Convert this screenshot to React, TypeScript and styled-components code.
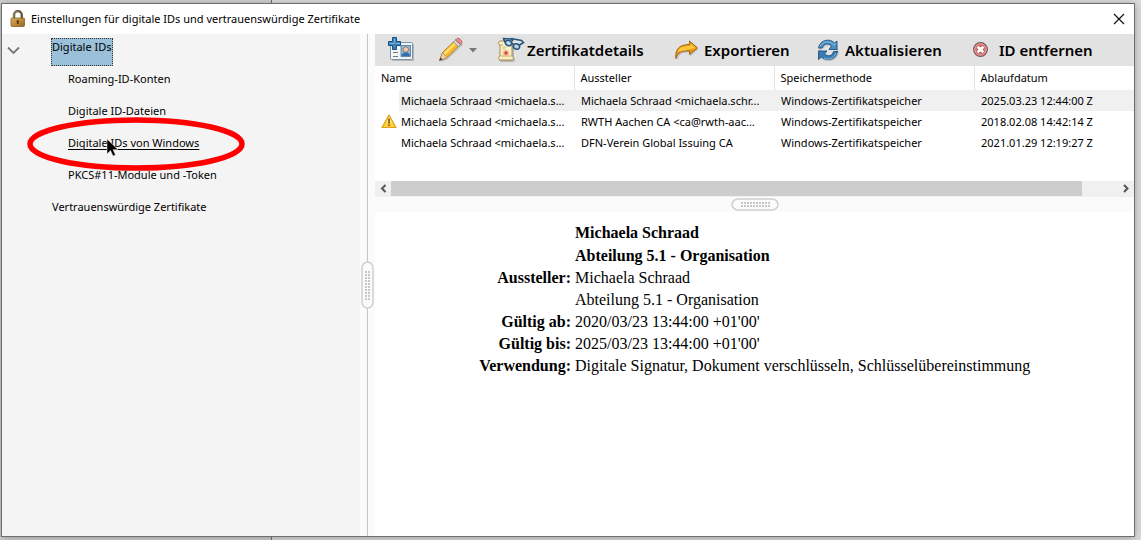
import React from "react";
import styled, { createGlobalStyle } from "styled-components";

const Global = createGlobalStyle`
  * { box-sizing: border-box; }
  body { margin: 0; background: #d2d1d2; color: #000; font: 12px/18px "Noto Sans", "Open Sans", sans-serif; }
  button { font: inherit; color: inherit; background: none; border: 0; padding: 0; }
  svg { display: block; flex: none; }
`;

const Desktop = styled.div`
  display: flex;
  min-height: 100vh;
  padding: 3px 6px 3px 1px;
  background: linear-gradient(90deg, transparent 271px, #707070 271px, #707070 272px, #dcdcdc 272px);
`;

const Window = styled.main`
  flex: 1;
  min-width: 0;
  display: flex;
  flex-direction: column;
  background: #fff;
  border: 1px solid #6e6e6e;
  box-shadow: 0 1px 8px rgba(0, 0, 0, 0.3);
`;

const TitleBar = styled.header`
  display: flex;
  align-items: center;
  gap: 4px;
  height: 30px;
  padding: 0 9px 0 8px;
`;

const Title = styled.h1`
  flex: 1;
  margin: 0;
  font-size: 11px;
  font-weight: 400;
  white-space: nowrap;
`;

const Panes = styled.div`
  flex: 1;
  display: flex;
`;

const Sidebar = styled.nav`
  position: relative;
  flex: none;
  width: 358px;
  background: #f4f4f4;
  padding: 4px 0 0 5px;
  font-size: 11px;
`;

const TreeRow = styled.div<{ $level: number }>`
  display: flex;
  align-items: flex-start;
  height: 32px;
  padding-left: ${(p) => (p.$level === 2 ? 61 : p.$level === 1 ? 45 : 0)}px;
`;

const Toggle = styled.button`
  width: 13px;
  height: 18px;
  margin: 4px 31px 0 0;
`;

const TreeLink = styled.a<{ $selected?: boolean; $hovered?: boolean }>`
  color: #000;
  white-space: nowrap;
  text-decoration: ${(p) => (p.$hovered ? "underline" : "none")};
  text-underline-offset: 2px;
  ${(p) =>
    p.$selected &&
    `height: 28px; line-height: 16px; background: #9ac0da; border: 1px dotted #333;`}
`;

const Annotation = styled.svg`
  position: absolute;
  left: 24px;
  top: 82px;
`;

const Divider = styled.div<{ $vertical?: boolean }>`
  display: flex;
  flex: none;
  align-items: center;
  justify-content: center;
  background: #fbfbfb;
  ${(p) =>
    p.$vertical
      ? `width: 15px; background: linear-gradient(#c4c4c4, #c4c4c4) center / 1px 100% no-repeat #fbfbfb;`
      : `height: 15px;`}
`;

const Content = styled.section`
  flex: 1;
  min-width: 0;
  display: flex;
  flex-direction: column;
`;

const Toolbar = styled.div`
  display: flex;
  align-items: center;
  height: 32px;
  padding-left: 13px;
  background: #e2e2e2;
`;

const ToolButton = styled.button<{ $width: number; $gap?: number }>`
  display: flex;
  flex: none;
  align-items: center;
  gap: ${(p) => p.$gap ?? 6}px;
  width: ${(p) => p.$width}px;
  height: 32px;
  font-size: 15px;
  font-weight: 600;
  line-height: 20px;
  white-space: nowrap;
`;

const TableArea = styled.div`
  height: 115px;
  overflow: hidden;
`;

const CertTable = styled.table`
  width: 100%;
  table-layout: fixed;
  border-collapse: collapse;
  font-size: 11px;
  white-space: nowrap;
`;

const HeadCell = styled.th`
  height: 24px;
  padding: 0 6px;
  font-weight: 400;
  text-align: left;
  & + & { border-left: 1px solid #e2e2e2; }
`;

const Cell = styled.td<{ $selected?: boolean }>`
  height: 21px;
  padding: 0 0 0 7px;
  background: ${(p) => (p.$selected ? "#f0f0f0" : "transparent")};
`;

const IconCell = styled(Cell)`
  padding: 0 0 0 6px;
`;

const NameCell = styled(Cell)`
  padding: 0 0 0 2px;
`;

const Scrollbar = styled.div`
  display: flex;
  height: 16px;
  background: #f0f0f0;
`;

const ScrollArrow = styled.button`
  width: 16px;
  height: 15px;
`;

const ScrollTrack = styled.div`
  flex: 1;
`;

const ScrollThumb = styled.div`
  width: 95%;
  height: 15px;
  background: #cdcdcd;
`;

const Details = styled.table`
  margin: 9px 0 20px 100px;
  align-self: flex-start;
  border-collapse: collapse;
  font: 16px/22px "Liberation Serif", "Times New Roman", serif;
`;

const DetailRow = styled.tr<{ $subject?: boolean }>`
  line-height: ${(p) => (p.$subject ? 23 : 22)}px;
  font-weight: ${(p) => (p.$subject ? 700 : 400)};
`;

const DetailLabel = styled.th`
  width: 96px;
  padding: 0;
  text-align: right;
  font-weight: 700;
`;

const DetailValue = styled.td`
  padding: 0 0 0 4px;
`;

function LockIcon() {
  return (
    <svg width="17" height="18" viewBox="0 0 17 18">
      <defs>
        <linearGradient id="lock" x1="0" x2="1" y1="0" y2="1">
          <stop offset="0" stopColor="#dcae62" />
          <stop offset="0.5" stopColor="#bd8a3c" />
          <stop offset="1" stopColor="#966622" />
        </linearGradient>
      </defs>
      <path d="M4 9V5a3.800 3.800 0 0 1 7.800 0v4" fill="none" stroke="#65563d" strokeWidth="2.4" />
      <path d="M3.600 8V5a4 4 0 0 1 4-3.700" fill="none" stroke="#a99b80" strokeWidth="0.8" />
      <rect x="1" y="8" width="13.500" height="8.500" rx="1" fill="url(#lock)" stroke="#8c6225" strokeWidth="0.8" />
      <circle cx="7.800" cy="11.500" r="1.200" fill="#543407" />
      <path d="M7.300 11.500h1l.4 2.500H6.900z" fill="#543407" />
    </svg>
  );
}

function AddCardIcon() {
  return (
    <svg width="27" height="26" viewBox="0 0 27 26">
      <rect x="4" y="7" width="22" height="17" rx="1" fill="#8a8a8a" opacity="0.5" />
      <rect x="2.500" y="5.500" width="22" height="17" rx="1" fill="#f1f5f8" stroke="#7992a5" />
      <rect x="13" y="8.500" width="9.500" height="11" fill="#8dbce0" stroke="#4c7596" strokeWidth="0.800" />
      <path d="M13.500 19c0-5 8.500-5 8.500 0z" fill="#2f6fae" />
      <circle cx="17.800" cy="12.500" r="2.700" fill="#f1cba4" stroke="#7c5735" strokeWidth="0.700" />
      <path d="M5 15.500h5M5 19.500h5" stroke="#777" />
      <path d="M4.500 0.500h4v4h4v4h-4v4h-4v-4h-4v-4h4z" fill="#3b80b8" stroke="#1b507e" />
      <path d="M6.500 1.500v5H1.500M7.500 6.500H12" fill="none" stroke="#79b4dd" />
    </svg>
  );
}

function PencilIcon() {
  return (
    <svg width="27" height="26" viewBox="0 0 27 26">
      <path d="M3 24 9 21.500 24.500 7" stroke="#888" strokeWidth="2" opacity="0.4" fill="none" />
      <path d="M1.500 23.500 4.500 15.500 16 4.500l4.500 4.500L9 20.500z" fill="#f6b92c" stroke="#a96b16" strokeWidth="0.800" />
      <path d="M5.500 16 16.500 5.500l1.500 1.500L7 18z" fill="#ffdf72" />
      <path d="M1.500 23.500 4.500 15.500 9 20.500z" fill="#efd1a1" stroke="#9a7a4c" strokeWidth="0.600" />
      <path d="M1.500 23.500 2.500 20.500l2 2z" fill="#393939" />
      <path d="m15.500 5 2-2 4.800 4.500-2 2z" fill="#d8dadd" stroke="#777" strokeWidth="0.600" />
      <path d="m17.500 3 1.500-1.500c2-1.200 5.800 2.500 4.800 4.500l-1.500 1.500z" fill="#e98d8c" stroke="#a94747" strokeWidth="0.700" />
    </svg>
  );
}

function CertificateIcon() {
  return (
    <svg width="28" height="26" viewBox="0 0 28 26">
      <path d="M3 6h14v15c2 0 1.500 4-1 4H5c-3 0-3-3-2-4z" fill="#777" opacity="0.4" />
      <path d="M3 8C1 8 1 4 3.500 4H15v15c2.500 1 1.500 4-1 4H4c-3 0-3-3-1-4z" fill="#fbf0c5" stroke="#a98a48" />
      <path d="M3 8h3M3.500 19H15" stroke="#c8aa66" />
      <path d="M5.500 10h4M5.500 12h3" stroke="#c9bc92" />
      <circle cx="9" cy="16" r="3" fill="#f4b89c" />
      <circle cx="9" cy="16" r="1.700" fill="#d84b31" />
      <path d="M8 5.500 6.500 1.500l8 .5 1.500 2M22.500 8l4-2.500-2-2L14 1.500" fill="none" stroke="#22537c" strokeWidth="1.500" />
      <ellipse cx="11.500" cy="6" rx="3.200" ry="2.600" transform="rotate(20 11.500 6)" fill="#b7d6ee" stroke="#22537c" strokeWidth="1.500" />
      <ellipse cx="19.500" cy="9.500" rx="3.200" ry="2.600" transform="rotate(20 19.500 9.500)" fill="#b7d6ee" stroke="#22537c" strokeWidth="1.500" />
      <path d="m14.500 6.500 2 .8" stroke="#22537c" strokeWidth="1.500" />
    </svg>
  );
}

function ExportIcon() {
  return (
    <svg width="24" height="22" viewBox="0 0 24 22">
      <path d="M2 20.500C0 11 6 7.500 15 7.500V4l8 6.500-8 7v-4C8 13.500 4 14 2.500 21z" fill="#777" opacity="0.350" />
      <path d="M0.800 19.500C0 9.500 5 5.500 14.500 5.500V2l8 7-8 6.500V12C7 11.500 2.500 13 0.800 19.500z" fill="#e8990f" stroke="#93600f" strokeWidth="0.900" />
      <path d="M2.500 13C4 8.500 8 7 15.500 7V4.500l5 4.500z" fill="#fcc63f" />
    </svg>
  );
}

function RefreshIcon() {
  return (
    <svg width="22" height="22" viewBox="0 0 22 22">
      <ellipse cx="11.500" cy="13" rx="9" ry="8" fill="none" stroke="#888" strokeWidth="3" opacity="0.3" />
      <path d="M1.500 9C3 0.500 13-1 17.500 4l2.500-2v8.500h-8L14.500 7C11 3.500 6.500 4.500 5.500 9z" fill="#4b91c9" stroke="#214e7b" strokeWidth="0.900" />
      <path d="M20.500 12.500c-1.500 9-11.500 10-16 5.500L1.500 20.500V12h8.500L7.500 15c3.500 3 8 2 9-2.500z" fill="#397bb6" stroke="#214e7b" strokeWidth="0.900" />
      <path d="M3 7.500C6 1.500 13 1.500 17 6l2-1.500M7 19c4 2.500 10 .5 12-5" fill="none" stroke="#96c7e8" strokeWidth="0.900" />
    </svg>
  );
}

function RemoveIcon() {
  return (
    <svg width="16" height="16" viewBox="0 0 16 16">
      <circle cx="7.500" cy="7.500" r="6.800" fill="#df7778" stroke="#745052" strokeWidth="1.200" />
      <circle cx="7.500" cy="7.500" r="5.800" fill="none" stroke="#eeaaaa" strokeWidth="0.800" />
      <path d="m4.700 4.700 5.600 5.600M10.300 4.700l-5.600 5.600" stroke="#854b4b" strokeWidth="4" />
      <path d="m4.700 4.700 5.600 5.600M10.300 4.700l-5.600 5.600" stroke="#fff" strokeWidth="2.800" />
    </svg>
  );
}

function WarningIcon() {
  return (
    <svg width="16" height="15" viewBox="0 0 16 15" role="img" aria-label="Warnung">
      <path d="M8 1 15 13.500H1z" fill="#ffce3a" stroke="#dca01c" strokeLinejoin="round" strokeWidth="1.200" />
      <path d="M8 3 11 8.500H5z" fill="#fff0a8" opacity="0.800" />
      <path d="M8 4.500v5M8 10.500V12" stroke="#6d4a00" strokeWidth="1.500" />
    </svg>
  );
}

function Grip({ vertical = false }: { vertical?: boolean }) {
  const w = vertical ? 13 : 48;
  const h = vertical ? 48 : 13;
  const dots = Array.from({ length: 20 }, (_, i) => {
    const long = 10 + Math.floor(i / 2) * 3;
    const short = (i % 2) * 3 + 4;
    return <rect key={i} x={vertical ? short : long} y={vertical ? long : short} width="2" height="2" fill="#c8c8c8" />;
  });
  return (
    <svg width={w} height={h} viewBox={`0 0 ${w} ${h}`}>
      <rect x="1" y="1" width={w - 2} height={h - 2} rx="6" fill="#fbfbfb" stroke="#cfcfcf" strokeWidth="1.500" />
      {dots}
    </svg>
  );
}

const certificates = [
  { warn: false, name: "Michaela Schraad <michaela.s...", issuer: "Michaela Schraad <michaela.schr...", expires: "2025.03.23 12:44:00 Z" },
  { warn: true, name: "Michaela Schraad <michaela.s...", issuer: "RWTH Aachen CA <ca@rwth-aac...", expires: "2018.02.08 14:42:14 Z" },
  { warn: false, name: "Michaela Schraad <michaela.s...", issuer: "DFN-Verein Global Issuing CA", expires: "2021.01.29 12:19:27 Z" },
];

const details = [
  { label: "", value: "Michaela Schraad", subject: true },
  { label: "", value: "Abteilung 5.1 - Organisation", subject: true },
  { label: "Aussteller:", value: "Michaela Schraad" },
  { label: "", value: "Abteilung 5.1 - Organisation" },
  { label: "Gültig ab:", value: "2020/03/23 13:44:00 +01'00'" },
  { label: "Gültig bis:", value: "2025/03/23 13:44:00 +01'00'" },
  { label: "Verwendung:", value: "Digitale Signatur, Dokument verschlüsseln, Schlüsselübereinstimmung" },
];

export default function App() {
  return (
    <>
      <Global />
      <Desktop>
        <Window>
          <TitleBar>
            <LockIcon />
            <Title>Einstellungen für digitale IDs und vertrauenswürdige Zertifikate</Title>
            <button aria-label="Schließen">
              <svg width="12" height="12" viewBox="0 0 12 12">
                <path d="m1 1 10 10M11 1 1 11" stroke="#111" strokeWidth="1.200" />
              </svg>
            </button>
          </TitleBar>
          <Panes>
            <Sidebar>
              <TreeRow $level={0}>
                <Toggle aria-label="Digitale IDs zuklappen">
                  <svg width="13" height="18" viewBox="0 0 13 18">
                    <path d="m1 5.500 5.500 5.500L12 5.500" fill="none" stroke="#777" strokeWidth="1.800" />
                  </svg>
                </Toggle>
                <TreeLink href="#ids" $selected>Digitale IDs</TreeLink>
              </TreeRow>
              <TreeRow $level={2}><TreeLink href="#roaming">Roaming-ID-Konten</TreeLink></TreeRow>
              <TreeRow $level={2}><TreeLink href="#dateien">Digitale ID-Dateien</TreeLink></TreeRow>
              <TreeRow $level={2}><TreeLink href="#windows" $hovered>Digitale IDs von Windows</TreeLink></TreeRow>
              <TreeRow $level={2}><TreeLink href="#pkcs11">PKCS#11-Module und -Token</TreeLink></TreeRow>
              <TreeRow $level={1}><TreeLink href="#zertifikate">Vertrauenswürdige Zertifikate</TreeLink></TreeRow>
              <Annotation width="222" height="58" viewBox="0 0 222 58" aria-hidden="true">
                <ellipse cx="110" cy="28" rx="106" ry="24" fill="none" stroke="#fe0000" strokeWidth="5.500" />
                <path d="M81 23v15l3.500-3.500L87 40l2.500-1-2.500-5.500h5z" fill="#000" stroke="#f4f4f4" strokeWidth="0.500" />
              </Annotation>
            </Sidebar>
            <Divider $vertical><Grip vertical /></Divider>
            <Content>
              <Toolbar>
                <ToolButton $width={50} aria-label="Digitale ID hinzufügen"><AddCardIcon /></ToolButton>
                <ToolButton $width={59} $gap={4} aria-label="Bearbeiten">
                  <PencilIcon />
                  <svg width="8" height="5" viewBox="0 0 8 5"><path d="M0 0h8L4 4.500z" fill="#777" /></svg>
                </ToolButton>
                <ToolButton $width={178} $gap={2}><CertificateIcon />Zertifikatdetails</ToolButton>
                <ToolButton $width={142} $gap={5}><ExportIcon />Exportieren</ToolButton>
                <ToolButton $width={156}><RefreshIcon />Aktualisieren</ToolButton>
                <ToolButton $width={130} $gap={10}><RemoveIcon />ID entfernen</ToolButton>
              </Toolbar>
              <TableArea>
                <CertTable>
                  <colgroup>
                    <col style={{ width: 24 }} />
                    <col style={{ width: 175 }} />
                    <col style={{ width: 200 }} />
                    <col style={{ width: 200 }} />
                    <col />
                  </colgroup>
                  <thead>
                    <tr>
                      <HeadCell colSpan={2}>Name</HeadCell>
                      <HeadCell>Aussteller</HeadCell>
                      <HeadCell>Speichermethode</HeadCell>
                      <HeadCell>Ablaufdatum</HeadCell>
                    </tr>
                  </thead>
                  <tbody>
                    {certificates.map((c, i) => (
                      <tr key={c.expires}>
                        <IconCell>{c.warn && <WarningIcon />}</IconCell>
                        <NameCell $selected={i === 0}>{c.name}</NameCell>
                        <Cell $selected={i === 0}>{c.issuer}</Cell>
                        <Cell $selected={i === 0}>Windows-Zertifikatspeicher</Cell>
                        <Cell $selected={i === 0}>{c.expires}</Cell>
                      </tr>
                    ))}
                  </tbody>
                </CertTable>
              </TableArea>
              <Scrollbar>
                <ScrollArrow aria-label="Nach links">
                  <svg width="16" height="15" viewBox="0 0 16 15"><path d="M10.500 4 7 7.500l3.500 3.500" fill="none" stroke="#555" strokeWidth="2" /></svg>
                </ScrollArrow>
                <ScrollTrack><ScrollThumb /></ScrollTrack>
                <ScrollArrow aria-label="Nach rechts">
                  <svg width="16" height="15" viewBox="0 0 16 15"><path d="M6 4l3.500 3.500L6 11" fill="none" stroke="#555" strokeWidth="2" /></svg>
                </ScrollArrow>
              </Scrollbar>
              <Divider><Grip /></Divider>
              <Details>
                <tbody>
                  {details.map((d, i) => (
                    <DetailRow key={i} $subject={d.subject}>
                      <DetailLabel scope="row">{d.label}</DetailLabel>
                      <DetailValue>{d.value}</DetailValue>
                    </DetailRow>
                  ))}
                </tbody>
              </Details>
            </Content>
          </Panes>
        </Window>
      </Desktop>
    </>
  );
}
